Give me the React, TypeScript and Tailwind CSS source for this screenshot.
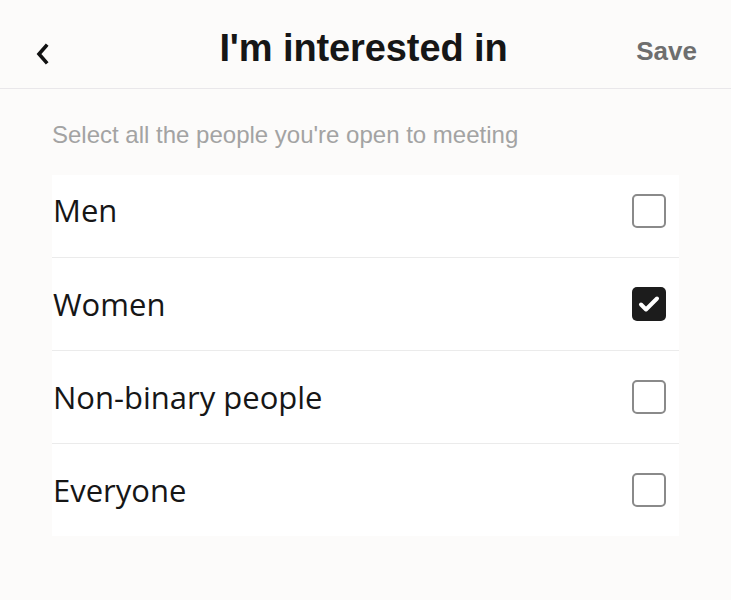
import React, { useState } from "react";

const options = ["Men", "Women", "Non-binary people", "Everyone"];

const Checkbox = ({ checked }: { checked: boolean }) =>
  checked ? (
    <span className="flex h-[34px] w-[34px] items-center justify-center rounded-[5px] bg-[#1c1c1c]">
      <svg width="22" height="18" viewBox="0 0 22 18" fill="none">
        <path d="M3 9.5l5 5L19 3.5" stroke="#fff" strokeWidth="4" strokeLinecap="round" strokeLinejoin="round" />
      </svg>
    </span>
  ) : (
    <span className="block h-[34px] w-[34px] rounded-[5px] border-2 border-[#8a8a8a] bg-white" />
  );

export default function App() {
  const [selected, setSelected] = useState<string[]>(["Women"]);

  const toggle = (name: string) =>
    setSelected(selected.includes(name) ? selected.filter((s) => s !== name) : [...selected, name]);

  return (
    <div className="min-h-[600px] bg-[#fcfbfa] font-['Liberation_Sans',Arial,sans-serif] text-[#161616]">
      {/* Header */}
      <header className="grid h-[89px] grid-cols-[1fr_auto_1fr] items-center border-b border-[#e9e7ea] pt-[14px] pl-[30px] pr-[34px]">
        <button className="mt-[6px] flex h-[40px] w-[24px] items-center justify-center">
          <svg width="16" height="24" viewBox="0 0 16 24" fill="none">
            <path d="M12 4L5 12l7 8" stroke="#111" strokeWidth="3.6" strokeLinecap="square" />
          </svg>
        </button>
        <h1 className="-mt-[6px] text-[38px] font-bold leading-none tracking-[-0.1px]">I'm interested in</h1>
        <button className="justify-self-end text-[26px] font-bold text-[#6e6e6e]">Save</button>
      </header>

      <main className="px-[52px]">
        <p className="pt-[32px] pb-[26px] text-[24px] leading-[28px] text-[#a3a3a3]">
          Select all the people you're open to meeting
        </p>

        <ul className="bg-white font-['Open_Sans',sans-serif]">
          {options.map((name, i) => (
            <li
              key={name}
              onClick={() => toggle(name)}
              className={`flex cursor-pointer items-center justify-between pr-[13px] ${
                i === 0 ? "h-[82px] pb-[11px]" : "h-[93px] border-t border-[#ebebeb]"
              }`}
            >
              <span className="pl-[1px] text-[31px] leading-none">{name}</span>
              <Checkbox checked={selected.includes(name)} />
            </li>
          ))}
        </ul>
      </main>
    </div>
  );
}
